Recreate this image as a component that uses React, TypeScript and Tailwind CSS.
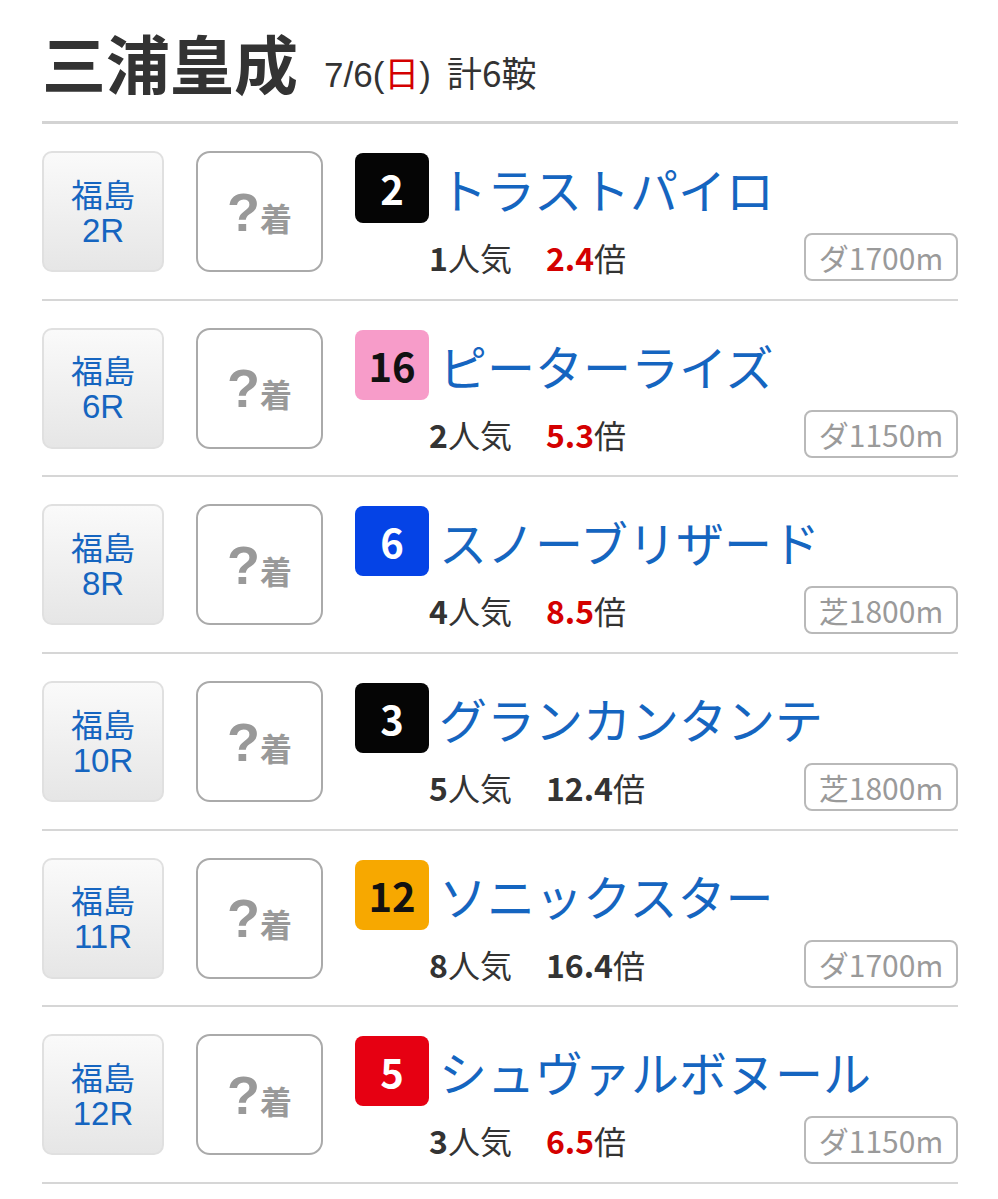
import React from "react";

type Race = {
  venue: string;
  race: string;
  num: string;
  numBg: string;
  numText: string;
  name: string;
  pop: string;
  odds: string;
  dist: string;
};

const races: Race[] = [
  { venue: "福島", race: "2R", num: "2", numBg: "bg-[#050505]", numText: "text-white", name: "トラストパイロ", pop: "1", odds: "2.4", dist: "ダ1700m" },
  { venue: "福島", race: "6R", num: "16", numBg: "bg-[#f79cc9]", numText: "text-[#111]", name: "ピーターライズ", pop: "2", odds: "5.3", dist: "ダ1150m" },
  { venue: "福島", race: "8R", num: "6", numBg: "bg-[#0543e6]", numText: "text-white", name: "スノーブリザード", pop: "4", odds: "8.5", dist: "芝1800m" },
  { venue: "福島", race: "10R", num: "3", numBg: "bg-[#050505]", numText: "text-white", name: "グランカンタンテ", pop: "5", odds: "12.4", dist: "芝1800m" },
  { venue: "福島", race: "11R", num: "12", numBg: "bg-[#f7a800]", numText: "text-[#111]", name: "ソニックスター", pop: "8", odds: "16.4", dist: "ダ1700m" },
  { venue: "福島", race: "12R", num: "5", numBg: "bg-[#e60012]", numText: "text-white", name: "シュヴァルボヌール", pop: "3", odds: "6.5", dist: "ダ1150m" },
];

const jp = "font-['Noto_Sans_CJK_JP','Noto_Sans',sans-serif]";

function Row({ r }: { r: Race }) {
  const low = parseFloat(r.odds) < 10;
  return (
    <div className="flex items-start border-b-2 border-[#d6d6d6] pb-[17.7px] pt-[27px]">
      <div className="flex h-[121px] w-[122px] shrink-0 flex-col items-center justify-center rounded-[10px] border-2 border-[#e0e0e0] bg-gradient-to-b from-[#fafafa] to-[#e6e6e6] text-[32px] leading-[38px] text-[#1565c0]">
        <span>{r.venue}</span>
        <span className="font-['Liberation_Sans',sans-serif] text-[33px]">{r.race}</span>
      </div>
      <div className="ml-[32px] flex h-[121px] w-[127px] shrink-0 items-center justify-center rounded-[14px] border-2 border-[#aaaaaa] bg-white text-[#999999]">
        <span className="font-['Liberation_Sans',sans-serif] text-[54px] font-bold leading-none">?</span>
        <span className="mt-[10px] text-[32px] font-bold leading-none">着</span>
      </div>
      <div className="ml-[32px] mt-[2px] flex min-w-0 flex-1 flex-col">
        <div className="flex items-center">
          <div className={`flex h-[70px] w-[74px] shrink-0 items-center justify-center rounded-[8px] ${r.numBg} ${r.numText} text-[40px] font-bold leading-none`}>
            {r.num}
          </div>
          <div className="ml-[10px] whitespace-nowrap text-[48px] leading-none text-[#1565c0]">{r.name}</div>
        </div>
        <div className="mt-[10px] flex items-center justify-between">
          <div className="ml-[74px] flex items-baseline text-[32px] leading-none text-[#333333]">
            <span className="font-bold">{r.pop}</span>
            <span>人気</span>
            <span className={`ml-[34px] font-bold ${low ? "text-[#d40000]" : "text-[#333333]"}`}>{r.odds}</span>
            <span>倍</span>
          </div>
          <div className="flex h-[48px] w-[154px] items-center justify-center rounded-[8px] border-2 border-[#b9b9b9] text-[30px] leading-none text-[#9a9a9a]">
            {r.dist}
          </div>
        </div>
      </div>
    </div>
  );
}

export default function App() {
  return (
    <div className={`min-h-[1199px] w-[998px] bg-white ${jp}`}>
      <div className="pl-[42px] pr-[40px]">
        <div className="flex items-end border-b-[3px] border-[#d3d3d3] pb-[28px] pt-[29px]">
          <h1 className="text-[64px] font-bold leading-none text-[#333333]">三浦皇成</h1>
          <div className="mb-[1px] ml-[26px] text-[35px] leading-none text-[#333333]">
            <span className="font-['Liberation_Sans',sans-serif]">7/6(</span>
            <span className="text-[#d40000]">日</span>
            <span className="font-['Liberation_Sans',sans-serif]">)</span>
            <span className="ml-[16px]">計6鞍</span>
          </div>
        </div>
        {races.map((r, i) => (
          <Row key={i} r={r} />
        ))}
      </div>
    </div>
  );
}
